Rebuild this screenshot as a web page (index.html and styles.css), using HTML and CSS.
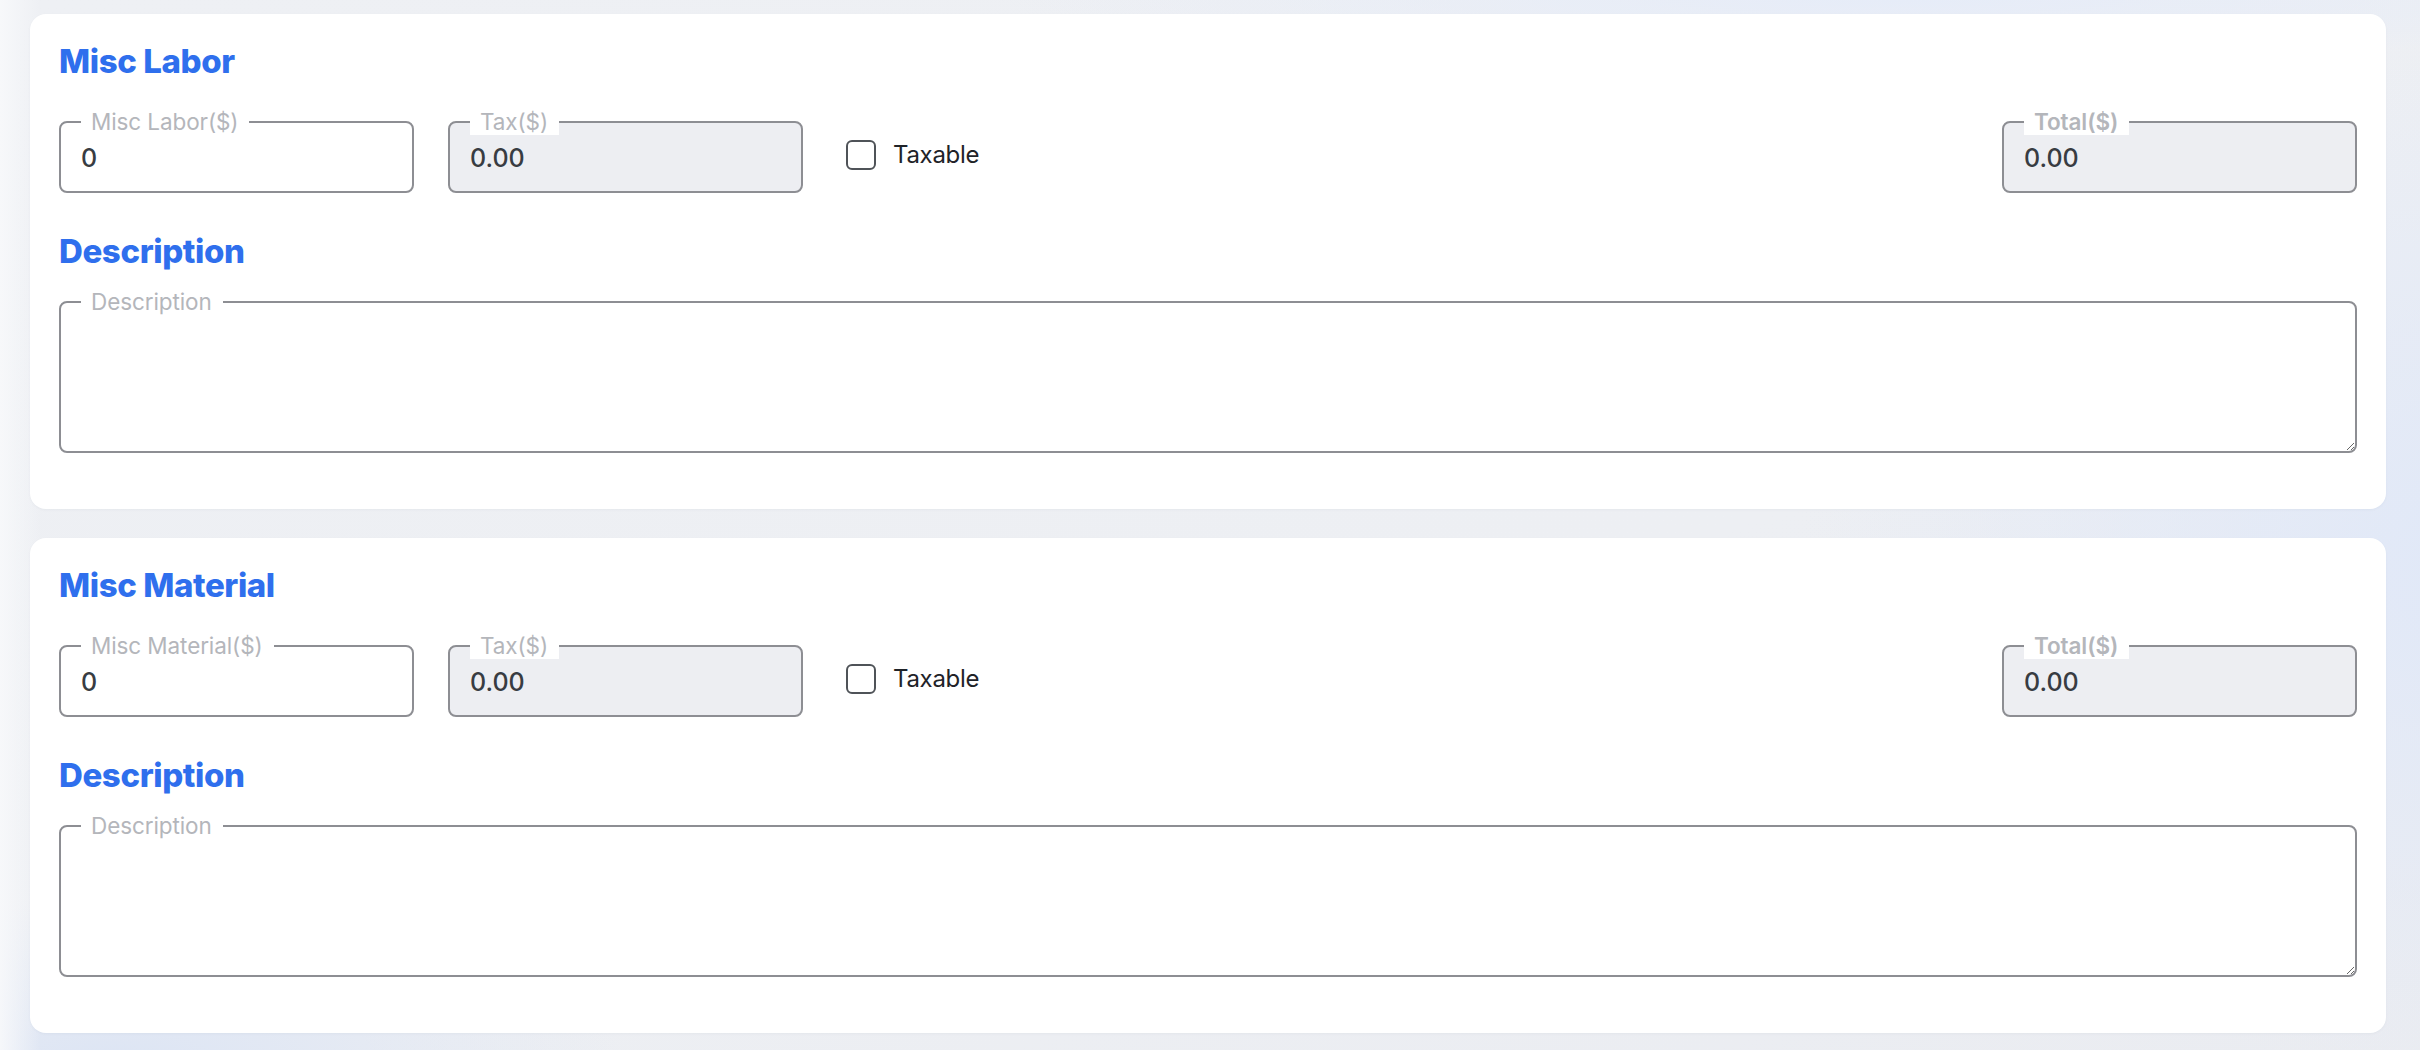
FILE: index.html
```html
<!DOCTYPE html>
<html lang="en">
<head>
<meta charset="utf-8">
<title>Misc Labor / Misc Material</title>
<link rel="stylesheet" href="styles.css">
</head>
<body>
<div class="page">
  <section class="card">
    <h2 class="card-title">Misc Labor</h2>
    <div class="row">
      <div class="field">
        <input class="field-input" type="text" value="0">
        <label class="field-label">Misc Labor($)</label>
      </div>
      <div class="field">
        <input class="field-input is-readonly" type="text" value="0.00" readonly>
        <label class="field-label">Tax($)</label>
      </div>
      <label class="check">
        <input class="check-box" type="checkbox">
        <span class="check-text">Taxable</span>
      </label>
      <div class="field field-total">
        <input class="field-input is-readonly" type="text" value="0.00" readonly>
        <label class="field-label is-strong">Total($)</label>
      </div>
    </div>
    <h2 class="card-title sub-title">Description</h2>
    <div class="field field-area">
      <textarea class="area-input"></textarea>
      <label class="field-label">Description</label>
    </div>
  </section>

  <section class="card">
    <h2 class="card-title">Misc Material</h2>
    <div class="row">
      <div class="field">
        <input class="field-input" type="text" value="0">
        <label class="field-label">Misc Material($)</label>
      </div>
      <div class="field">
        <input class="field-input is-readonly" type="text" value="0.00" readonly>
        <label class="field-label">Tax($)</label>
      </div>
      <label class="check">
        <input class="check-box" type="checkbox">
        <span class="check-text">Taxable</span>
      </label>
      <div class="field field-total">
        <input class="field-input is-readonly" type="text" value="0.00" readonly>
        <label class="field-label is-strong">Total($)</label>
      </div>
    </div>
    <h2 class="card-title sub-title">Description</h2>
    <div class="field field-area">
      <textarea class="area-input"></textarea>
      <label class="field-label">Description</label>
    </div>
  </section>
</div>
</body>
</html>
```

FILE: styles.css
```css
html, body {
  margin: 0;
  padding: 0;
}

body {
  height: 1050px;
  overflow: hidden;
  font-family: Inter, "Noto Sans", "Liberation Sans", sans-serif;
  background:
    linear-gradient(90deg, rgba(248,249,251,0.9) 0px, rgba(248,249,251,0) 40px),
    radial-gradient(ellipse 700px 520px at 2500px 560px, #e0e8f8 0%, rgba(224,232,248,0) 100%),
    radial-gradient(ellipse 900px 60px at 1900px 0px, #e6ecf8 0%, rgba(230,236,248,0) 100%),
    radial-gradient(ellipse 500px 160px at 120px 1060px, #dde5f4 0%, rgba(221,229,244,0) 100%),
    linear-gradient(160deg, #eef0f4 0%, #edeff3 60%, #eaecf1 100%);
}

.page {
  display: flex;
  flex-direction: column;
  gap: 29px;
  padding: 14px 34px 0 30px;
}

.card {
  background: #ffffff;
  border-radius: 16px;
  padding: 27px 29px 56px;
  box-shadow: 0 1px 3px rgba(30, 40, 70, 0.04);
}

.card-title {
  margin: 0;
  font-size: 33px;
  line-height: 40px;
  font-weight: 800;
  letter-spacing: -0.4px;
  color: #2f6fed;
}

.sub-title {
  margin-top: 38px;
  margin-bottom: 30px;
}

.row {
  display: flex;
  align-items: center;
  margin-top: 40px;
}

.field {
  position: relative;
  width: 355px;
  height: 72px;
  margin-right: 34px;
}

.field-total {
  margin-left: auto;
  margin-right: 0;
}

.field-input {
  box-sizing: border-box;
  width: 100%;
  height: 100%;
  margin: 0;
  padding: 2px 20px 0;
  border: 2px solid #8d8e93;
  border-radius: 8px;
  background: #ffffff;
  font-family: Inter, "Noto Sans", "Liberation Sans", sans-serif;
  font-size: 25px;
  font-weight: 500;
  color: #383c42;
  outline: none;
}

.field-input.is-readonly {
  background: #edeef2;
}

.field-label {
  position: absolute;
  top: -13px;
  left: 22px;
  padding: 0 11px 0 10px;
  background: #ffffff;
  font-size: 22.5px;
  line-height: 27px;
  font-weight: 400;
  color: #b4b6bb;
  letter-spacing: -0.1px;
  white-space: nowrap;
}

.field-label.is-strong {
  font-weight: 600;
}

.check {
  display: flex;
  align-items: center;
  gap: 17px;
  margin-left: 9px;
  margin-top: -5px;
  cursor: pointer;
}

.check-box {
  appearance: none;
  -webkit-appearance: none;
  box-sizing: border-box;
  width: 30px;
  height: 30px;
  margin: 0;
  border: 2px solid #4f5358;
  border-radius: 6px;
  background: #ffffff;
}

.check-text {
  font-size: 24px;
  letter-spacing: -0.3px;
  color: #1f2328;
}

.field-area {
  width: 100%;
  height: 152px;
  margin-right: 0;
}

.area-input {
  box-sizing: border-box;
  display: block;
  width: 100%;
  height: 100%;
  margin: 0;
  padding: 20px;
  border: 2px solid #8d8e93;
  border-radius: 8px;
  background: #ffffff;
  font-family: Inter, "Noto Sans", "Liberation Sans", sans-serif;
  font-size: 24px;
  color: #3b3f45;
  resize: vertical;
  outline: none;
}
```
